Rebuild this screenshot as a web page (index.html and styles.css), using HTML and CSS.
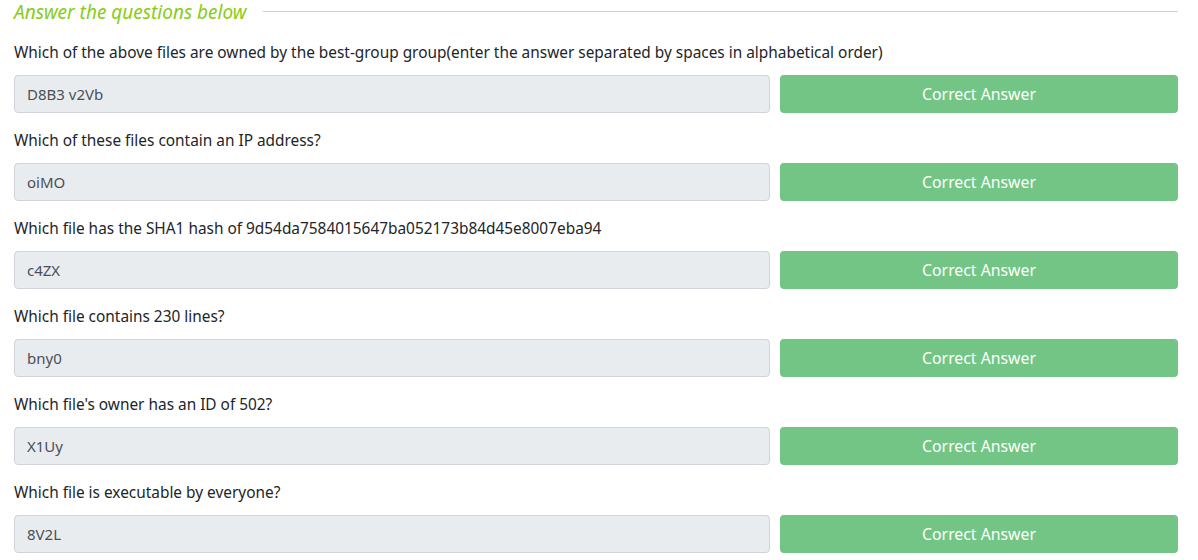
FILE: index.html
```html
<!DOCTYPE html>
<html>
<head>
<meta charset="utf-8">
<link rel="stylesheet" href="styles.css">
</head>
<body>
<div class="task">
  <div class="heading">
    <span class="heading-text">Answer the questions below</span>
    <span class="heading-line"></span>
  </div>
  <div class="question">
    <div class="q-text">Which of the above files are owned by the best-group group(enter the answer separated by spaces in alphabetical order)</div>
    <div class="q-row">
      <div class="answer">D8B3 v2Vb</div>
      <div class="btn">Correct Answer</div>
    </div>
  </div>
  <div class="question">
    <div class="q-text">Which of these files contain an IP address?</div>
    <div class="q-row">
      <div class="answer">oiMO</div>
      <div class="btn">Correct Answer</div>
    </div>
  </div>
  <div class="question">
    <div class="q-text">Which file has the SHA1 hash of 9d54da7584015647ba052173b84d45e8007eba94</div>
    <div class="q-row">
      <div class="answer">c4ZX</div>
      <div class="btn">Correct Answer</div>
    </div>
  </div>
  <div class="question">
    <div class="q-text">Which file contains 230 lines?</div>
    <div class="q-row">
      <div class="answer">bny0</div>
      <div class="btn">Correct Answer</div>
    </div>
  </div>
  <div class="question">
    <div class="q-text">Which file's owner has an ID of 502?</div>
    <div class="q-row">
      <div class="answer">X1Uy</div>
      <div class="btn">Correct Answer</div>
    </div>
  </div>
  <div class="question">
    <div class="q-text">Which file is executable by everyone?</div>
    <div class="q-row">
      <div class="answer">8V2L</div>
      <div class="btn">Correct Answer</div>
    </div>
  </div>
</div>
</body>
</html>
```
FILE: styles.css
```css
html, body {
  margin: 0;
  padding: 0;
  background: #ffffff;
}
body {
  font-family: "Noto Sans", "Open Sans", sans-serif;
  color: #212529;
}
.task {
  padding: 0 20px 0 14px;
}
.heading {
  display: flex;
  align-items: flex-start;
  height: 24px;
  gap: 16px;
}
.heading-text {
  font-style: italic;
  font-size: 19px;
  line-height: 24px;
  color: #88cc14;
  white-space: nowrap;
}
.heading-line {
  flex: 1;
  height: 1px;
  margin-top: 11px;
  background: #d0d0d0;
}
.question {
  margin-top: 15px;
}
.heading + .question {
  margin-top: 16px;
}
.q-text {
  font-size: 15.4px;
  line-height: 24px;
  padding-top: 1px;
  margin-bottom: 10px;
}
.q-row {
  display: flex;
  gap: 10px;
}
.answer {
  flex: 0 0 756px;
  box-sizing: border-box;
  height: 38px;
  padding: 0 12px;
  display: flex;
  align-items: center;
  background: #e9ecef;
  border: 1px solid #ced4da;
  border-radius: 4px;
  font-size: 15px;
  color: #495057;
}
.btn {
  flex: 1;
  height: 38px;
  display: flex;
  align-items: center;
  justify-content: center;
  background: #72c585;
  border-radius: 4px;
  color: #ffffff;
  font-size: 15.8px;
}
```
